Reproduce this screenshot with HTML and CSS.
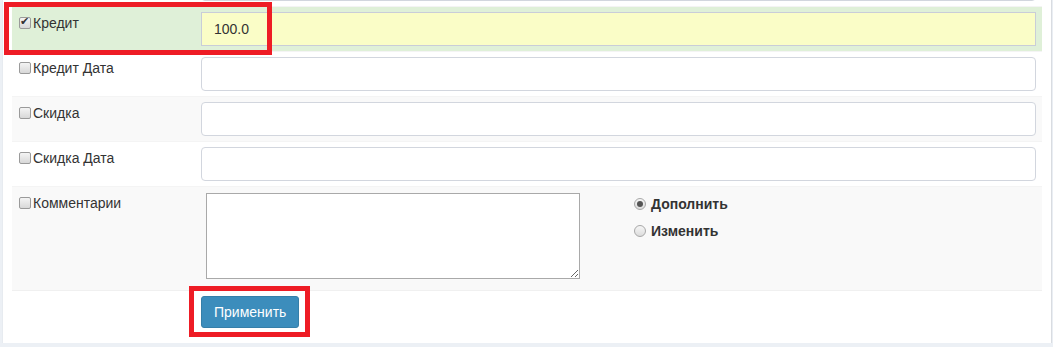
FILE: index.html
```html
<!DOCTYPE html>
<html lang="ru">
<head>
  <meta charset="UTF-8">
  <title>Массовое изменение</title>
  <link rel="stylesheet" href="styles.css">
</head>
<body>
  <div class="card">
    <div class="rows">

      <div class="row">
        <div class="cell-label"></div>
        <div class="cell-field"><input type="text" class="field"></div>
      </div>

      <div class="row row-success">
        <div class="cell-label"><label><input type="checkbox" class="chk" checked>Кредит</label></div>
        <div class="cell-field"><input type="text" class="field field-changed" value="100.0"></div>
      </div>

      <div class="row">
        <div class="cell-label"><label><input type="checkbox" class="chk">Кредит Дата</label></div>
        <div class="cell-field"><input type="text" class="field"></div>
      </div>

      <div class="row row-odd">
        <div class="cell-label"><label><input type="checkbox" class="chk">Скидка</label></div>
        <div class="cell-field"><input type="text" class="field"></div>
      </div>

      <div class="row">
        <div class="cell-label"><label><input type="checkbox" class="chk">Скидка Дата</label></div>
        <div class="cell-field"><input type="text" class="field"></div>
      </div>

      <div class="row row-odd">
        <div class="cell-label"><label><input type="checkbox" class="chk">Комментарии</label></div>
        <div class="cell-field comment-field">
          <textarea class="comment"></textarea>
          <div class="modes">
            <label class="mode"><input type="radio" name="mode" class="rad" checked>Дополнить</label>
            <label class="mode"><input type="radio" name="mode" class="rad">Изменить</label>
          </div>
        </div>
      </div>

      <div class="row row-last">
        <div class="cell-label"></div>
        <div class="cell-field"><button class="btn-apply">Применить</button></div>
      </div>

    </div>

    <!-- красные рамки-пометки со скриншота -->
    <div class="mark mark-credit"></div>
    <div class="mark mark-button"></div>
  </div>
</body>
</html>
```

FILE: styles.css
```css
body {
  margin: 0;
  background: #ecf0f5;
  font-family: 'Liberation Sans', Arial, sans-serif;
  font-size: 14px;
  color: #333;
  overflow: hidden;
}

.card {
  position: relative;
  margin: -39px 2px 0 3px;
  padding: 0 9px 10px 9px;
  background: #fff;
  box-shadow: 0 1px 1px rgba(0, 0, 0, 0.12), 1px 0 1px rgba(0, 0, 0, 0.06);
}

.row {
  display: grid;
  grid-template-columns: 181px 1fr;
  border-top: 1px solid #f4f4f4;
}

.row-odd {
  background: #f9f9f9;
}

.row-success {
  background: #dff0d8;
}

.row-last {
  border-top: 1px solid #f0f0f0;
}

.cell-label {
  padding: 6px 7px 5px 7px;
  line-height: 20px;
}

.cell-label label {
  display: flex;
  align-items: center;
}

.cell-field {
  padding: 5px 6px 5px 8px;
}

.field {
  display: block;
  box-sizing: border-box;
  width: 100%;
  height: 34px;
  padding: 6px 12px;
  border: 1px solid #d2d6de;
  border-radius: 4px;
  background: #fff;
  font-family: inherit;
  font-size: 14px;
  color: #333;
}

.field-changed {
  background: #fafdc7;
  border-radius: 0;
  border-color: #c9cdd8;
}

.chk {
  appearance: none;
  box-sizing: border-box;
  width: 12px;
  height: 12px;
  margin: 0 2px 0 0;
  border: 1px solid #9a9a9a;
  border-radius: 2px;
  background: linear-gradient(#f4f4f4, #d8d8d8);
  position: relative;
}

.chk:checked::after {
  content: "✔";
  position: absolute;
  left: 0;
  top: -3px;
  font-size: 11px;
  color: #333;
}

.comment-field {
  display: grid;
  grid-template-columns: 374px 1fr;
  padding-left: 13px;
}

.comment {
  box-sizing: border-box;
  width: 374px;
  height: 86px;
  margin: 1px 0 6px 0;
  border: 1px solid #a9a9a9;
  resize: both;
  font-family: inherit;
}

.modes {
  display: flex;
  flex-direction: column;
  gap: 7px;
  padding: 2px 0 0 54px;
}

.mode {
  display: flex;
  align-items: center;
  font-weight: bold;
  line-height: 20px;
}

.rad {
  appearance: none;
  box-sizing: border-box;
  width: 12px;
  height: 12px;
  margin: 0 5px 0 0;
  border: 1px solid #a8a8a8;
  border-radius: 50%;
  background: linear-gradient(#f6f6f6, #dcdcdc);
  position: relative;
}

.rad:checked::after {
  content: "";
  position: absolute;
  left: 2px;
  top: 2px;
  width: 6px;
  height: 6px;
  border-radius: 50%;
  background: #555;
}

.btn-apply {
  display: block;
  height: 32px;
  padding: 6px 12px;
  border: 1px solid #367fa9;
  border-radius: 3px;
  background: #3c8dbc;
  color: #fff;
  font-family: inherit;
  font-size: 14px;
  cursor: pointer;
}

.mark {
  position: absolute;
  border: 5px solid #ee1c25;
  box-sizing: border-box;
  pointer-events: none;
}

.mark-credit {
  left: 1px;
  top: 41px;
  width: 268px;
  height: 53px;
}

.mark-button {
  left: 186px;
  top: 325px;
  width: 121px;
  height: 51px;
}
```
